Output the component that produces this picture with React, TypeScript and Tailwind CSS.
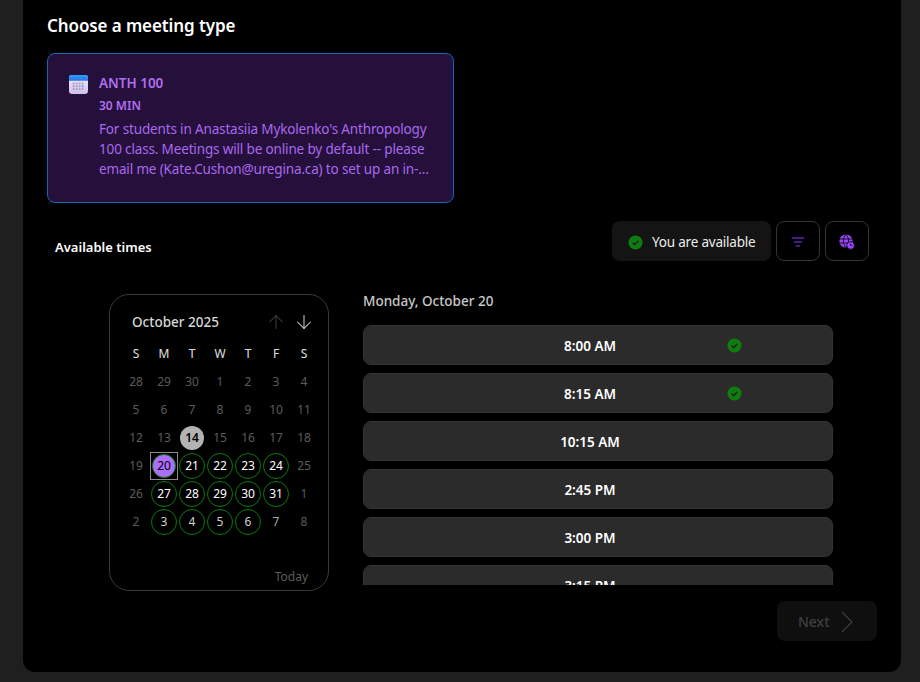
import { ArrowDown, ArrowUp } from "lucide-react";

const font = "font-['Noto_Sans','Open_Sans',sans-serif]";

function Check({ size = 15 }: { size?: number }) {
  return (
    <svg width={size} height={size} viewBox="0 0 16 16">
      <circle cx="8" cy="8" r="7.5" fill="#107c10" />
      <path d="M5 8.3l2.1 2 4-4.2" fill="none" stroke="#1b1b1b" strokeWidth="1.4" />
    </svg>
  );
}

function CalendarIcon() {
  const dots = [];
  for (let r = 0; r < 3; r++) for (let c = 0; c < 4; c++) dots.push(<rect key={`${r}${c}`} x={3.7 + c * 3} y={7.6 + r * 2.8} width="1.8" height="1.8" fill={r === 1 && c === 3 ? "#4aa3f5" : "#a79bc4"} />);
  return (
    <svg width="20" height="20" viewBox="0 0 20 20">
      <defs>
        <linearGradient id="body" x1="0" y1="0" x2="0" y2="1"><stop offset="0" stopColor="#f3eefc" /><stop offset="1" stopColor="#cfbfea" /></linearGradient>
        <linearGradient id="top" x1="0" y1="0" x2="0" y2="1"><stop offset="0" stopColor="#2aa0f5" /><stop offset="1" stopColor="#2f6fe8" /></linearGradient>
      </defs>
      <rect x="0" y="0" width="19" height="19" rx="3.2" fill="url(#body)" />
      <path d="M0 5.8V3.2A3.2 3.2 0 0 1 3.2 0h12.6A3.2 3.2 0 0 1 19 3.2v2.6z" fill="url(#top)" />
      {dots}
    </svg>
  );
}

const dim = "text-[#5c5c5c]";
const avail = "text-white border border-[#0b7a0b]";
const rows: (number | [number, string])[][] = [
  [28, 29, 30, 1, 2, 3, 4],
  [5, 6, 7, 8, 9, 10, 11],
  [12, 13, [14, "today"], 15, 16, 17, 18],
  [19, [20, "sel"], [21, "a"], [22, "a"], [23, "a"], [24, "a"], 25],
  [26, [27, "a"], [28, "a"], [29, "a"], [30, "a"], [31, "a"], 1],
  [2, [3, "n"], [4, "n"], [5, "n"], [6, "n"], [7, "p"], 8],
];

function Cell({ d }: { d: number | [number, string] }) {
  if (typeof d === "number") {
    return <div className={`flex h-7 w-7 items-center justify-center text-xs ${dim}`}>{d}</div>;
  }
  const [n, kind] = d;
  if (kind === "today") {
    return (
      <div className="flex h-7 w-7 items-center justify-center">
        <div className="flex h-6 w-6 items-center justify-center rounded-full bg-[#b3b3b3] text-xs font-semibold text-black">{n}</div>
      </div>
    );
  }
  if (kind === "sel") {
    return (
      <div className="flex h-7 w-7 items-center justify-center border border-[#8a8a8a]">
        <div className="flex h-6 w-6 items-center justify-center rounded-full border border-[#0b7a0b] bg-[#ab6ffb] text-xs text-black">{n}</div>
      </div>
    );
  }
  if (kind === "p") {
    return <div className="flex h-7 w-7 items-center justify-center text-xs text-[#a8a8a8]">{n}</div>;
  }
  return (
    <div className="flex h-7 w-7 items-center justify-center">
      <div className={`flex h-[26px] w-[26px] items-center justify-center rounded-full text-xs ${kind === "n" ? "border border-[#0b7a0b] text-[#cfcfcf]" : avail}`}>{n}</div>
    </div>
  );
}

const slots: { t: string; ok?: boolean }[] = [
  { t: "8:00 AM", ok: true },
  { t: "8:15 AM", ok: true },
  { t: "10:15 AM" },
  { t: "2:45 PM" },
  { t: "3:00 PM" },
  { t: "3:15 PM" },
];

export default function App() {
  return (
    <div className={`h-[682px] w-[920px] overflow-hidden bg-[#1f1f1f] pb-[10px] pl-[23px] pr-[19px] ${font}`}>
      <div className="h-full rounded-b-xl bg-black pl-6 pr-6">
        <h1 className="flex h-[53px] items-center pb-[1px] text-[17px] font-semibold tracking-[-0.1px] text-white">Choose a meeting type</h1>

        <div className="flex h-[150px] w-[407px] gap-[10px] rounded-lg border border-[#1068b8] bg-[#25103c] pl-[21px] pr-[22px] pt-[20px]">
          <div className="mt-[1px] shrink-0"><CalendarIcon /></div>
          <div className="min-w-0 text-[#b06ef0]">
            <div className="text-[13.5px] font-semibold leading-[19px]">ANTH 100</div>
            <div className="mt-[3px] text-xs font-semibold leading-[20px]">30 MIN</div>
            <p className="mt-[3px] text-[13.5px] leading-[20px] tracking-[-0.15px] text-[#a968ec]">
              For students in Anastasiia Mykolenko's Anthropology 100 class. Meetings will be online by default -- please email me (Kate.Cushon@uregina.ca) to set up an in-...
            </p>
          </div>
        </div>

        <div className="mt-[18px] flex h-10 items-center pl-2 pr-2">
          <div className="mt-[14px] flex-1 text-[13px] font-semibold text-white">Available times</div>
          <div className="flex h-10 w-[159px] items-center gap-[9px] rounded-lg bg-[#141414] pl-4 pt-[2px] text-[13.5px] tracking-[-0.2px] text-[#ececec]">
            <Check />
            <span>You are available</span>
          </div>
          <button className="ml-[5px] flex h-10 w-11 items-center justify-center rounded-lg border border-[#333333] pt-[1px]">
            <svg width="14" height="12" viewBox="0 0 14 12" fill="none" stroke="#8b3dff" strokeWidth="1.2">
              <path d="M1 2h12M3 6h8M5 10h4" />
            </svg>
          </button>
          <button className="ml-[5px] flex h-10 w-11 items-center justify-center rounded-lg border border-[#333333] pt-[1px]">
            <svg width="16" height="16" viewBox="0 0 16 16">
              <circle cx="7" cy="7" r="6.6" fill="#9747f5" />
              <path d="M0.6 5h12.8M0.6 9h12.8M7 .4c-3.4 3.6-3.4 9.6 0 13.2M7 .4c3.4 3.6 3.4 9.6 0 13.2" fill="none" stroke="#000" strokeWidth=".8" />
              <circle cx="11.6" cy="11.4" r="3.9" fill="#9747f5" stroke="#000" strokeWidth=".8" />
              <path d="M11.6 9.5v2h1.6" fill="none" stroke="#000" strokeWidth=".8" />
            </svg>
          </button>
        </div>

        <div className="mt-[33px] flex pl-[62px]">
          <div className="h-[297px] w-[220px] rounded-[20px] border border-[#3a3a3a] px-3">
            <div className="flex h-[54px] items-center pl-[10px] pr-[1px]">
              <span className="flex-1 pt-[1px] text-[13.5px] font-medium text-[#d6d6d6]">October 2025</span>
              <ArrowUp size={22} strokeWidth={1.1} className="mr-[6px] text-[#3d3d3d]" />
              <ArrowDown size={22} strokeWidth={1.1} className="text-[#cfcfcf]" />
            </div>
            <div className="-mt-[9px] grid w-[196px] grid-cols-7">
              {["S", "M", "T", "W", "T", "F", "S"].map((d, i) => (
                <div key={i} className="flex h-7 items-center justify-center text-xs text-[#e0e0e0]">{d}</div>
              ))}
              {rows.flat().map((d, i) => <Cell key={i} d={d} />)}
            </div>
            <div className="mt-[33px] pr-2 text-right text-xs text-[#5c5c5c]">Today</div>
          </div>

          <div className="ml-[34px] w-[470px]">
            <div className="flex h-[14px] items-center text-[13.5px] font-medium text-[#c8c8c8]">Monday, October 20</div>
            <div className="mt-[17px] flex h-[260px] flex-col gap-2 overflow-hidden">
              {slots.map((s) => (
                <div key={s.t} className="flex h-10 shrink-0 items-center justify-center rounded-lg border border-[#333333] bg-[#2b2b2b] pr-4 pt-[2px] text-[13.5px] font-semibold text-white">
                  <span className="relative">
                    {s.t}
                    {s.ok && <span className="absolute left-full top-[2px] ml-[111px]"><Check /></span>}
                  </span>
                </div>
              ))}
            </div>
          </div>
        </div>

        <div className="mt-[10px] flex justify-end">
          <button className="flex h-10 w-[100px] items-center rounded-lg bg-[#0f0f0f] pl-[21px] pt-[2px] text-sm font-medium text-[#3f3f3f]">
            Next
            <svg width="12" height="22" viewBox="0 0 12 22" fill="none" stroke="#3f3f3f" strokeWidth="1.1" className="ml-[11px]">
              <path d="M1 1l10 10-10 10" />
            </svg>
          </button>
        </div>
      </div>
    </div>
  );
}
